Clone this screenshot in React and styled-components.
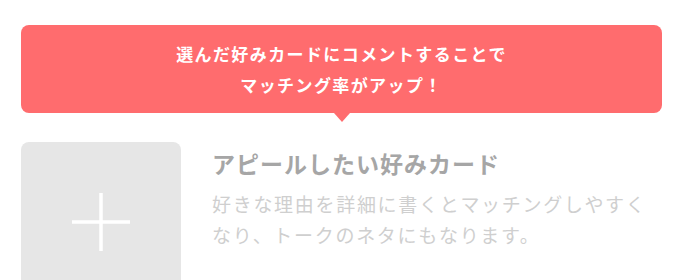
import React from "react";
import styled, { createGlobalStyle } from "styled-components";

const GlobalStyle = createGlobalStyle`
  html, body {
    margin: 0;
    padding: 0;
    background: #ffffff;
  }
  body {
    font-family: "Noto Sans CJK JP", "Noto Sans", sans-serif;
  }
`;

const Page = styled.div`
  width: 680px;
  height: 280px;
  overflow: hidden;
  box-sizing: border-box;
  padding: 25px 18px 0 21px;
`;

const Bubble = styled.div`
  position: relative;
  height: 88px;
  border-radius: 8px;
  background: #ff6c6e;
  display: flex;
  align-items: center;
  justify-content: center;
  color: #ffffff;
  font-size: 17px;
  font-weight: 700;
  letter-spacing: 1.4px;
  line-height: 31px;
  text-align: center;

  &::after {
    content: "";
    position: absolute;
    left: 50%;
    bottom: -9px;
    margin-left: -8px;
    border-left: 8px solid transparent;
    border-right: 8px solid transparent;
    border-top: 9px solid #ff6c6e;
  }
`;

const Card = styled.div`
  display: flex;
  gap: 31px;
  margin-top: 29px;
`;

const Thumb = styled.button`
  flex: none;
  width: 160px;
  height: 160px;
  border: 0;
  padding: 0;
  border-radius: 8px;
  background: #e6e6e6;
  display: flex;
  align-items: center;
  justify-content: center;
`;

const Body = styled.div`
  padding-top: 6px;
`;

const Title = styled.div`
  font-size: 23px;
  font-weight: 700;
  color: #a6a6a6;
  letter-spacing: 1px;
  line-height: 30px;
`;

const Desc = styled.div`
  margin-top: 10px;
  font-size: 19px;
  color: #cfcfcf;
  letter-spacing: 1.7px;
  line-height: 31px;
`;

const Plus = () => (
  <svg width="58" height="58" viewBox="0 0 58 58">
    <path d="M29 0V58M0 29H58" stroke="#ffffff" strokeWidth="3.5" />
  </svg>
);

export default function App() {
  return (
    <>
      <GlobalStyle />
      <Page>
        <Bubble>
          選んだ好みカードにコメントすることで
          <br />
          マッチング率がアップ！
        </Bubble>
        <Card>
          <Thumb aria-label="追加">
            <Plus />
          </Thumb>
          <Body>
            <Title>アピールしたい好みカード</Title>
            <Desc>
              好きな理由を詳細に書くとマッチングしやすく
              <br />
              なり、トークのネタにもなります。
            </Desc>
          </Body>
        </Card>
      </Page>
    </>
  );
}
